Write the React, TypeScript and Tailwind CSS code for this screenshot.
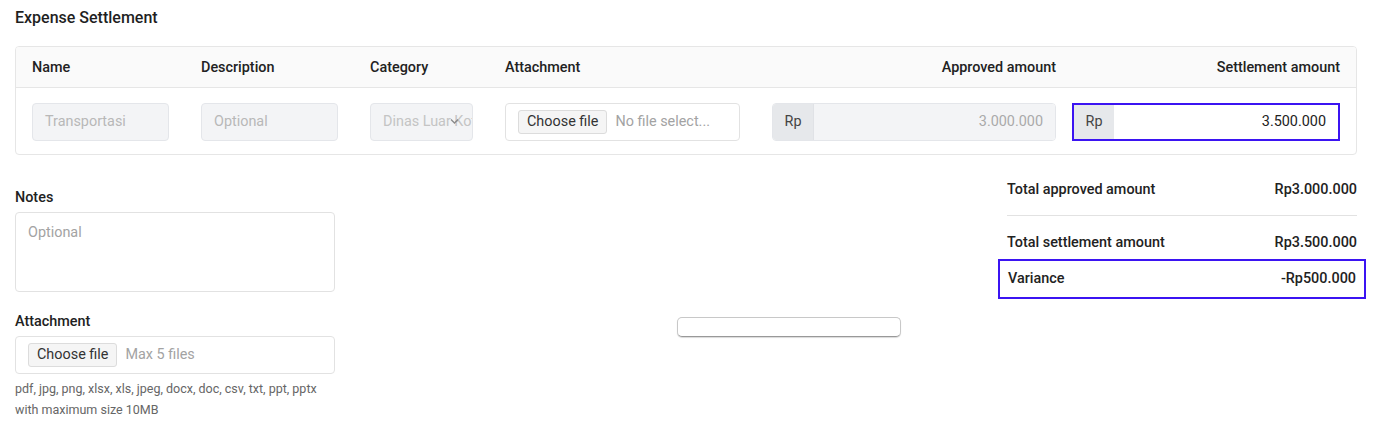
import React from 'react';

const purple = 'border-[#3b14f2]';

const FileButton: React.FC<{ label: string }> = ({ label }) => (
  <div className="flex items-center h-[38px] border border-[#e2e2e2] rounded-[4px] bg-white px-3 gap-2">
    <span className="h-[24px] px-2 flex items-center border border-[#dcdcdc] rounded-[3px] bg-[#f5f5f5] text-[14.4px] text-[#333]">Choose file</span>
    <span className="text-[14.4px] text-[#a3a3a3] whitespace-nowrap overflow-hidden text-ellipsis">{label}</span>
  </div>
);

const SummaryRow: React.FC<{ label: string; value: string }> = ({ label, value }) => (
  <div className="flex items-center justify-between text-[14.4px] font-medium text-[#222]">
    <span>{label}</span>
    <span>{value}</span>
  </div>
);

export default function App() {
  return (
    <div className="w-[1381px] h-[437px] bg-white font-['Roboto',sans-serif] text-[#222] pl-[15px] pr-[25px] pt-[7px]">
      <h2 className="text-[16px] font-medium leading-[21px] text-[#1f1f1f]">Expense Settlement</h2>

      {/* Items table */}
      <div className="mt-[18px] w-[1342px] border border-[#e6e6e6] rounded-[4px] overflow-hidden">
        <div className="flex items-center h-[41px] pt-[2px] bg-[#fafafa] border-b border-[#e6e6e6] px-4 text-[14.4px] font-medium text-[#222]">
          <div className="w-[137px]">Name</div>
          <div className="w-[137px] ml-[32px]">Description</div>
          <div className="w-[103px] ml-[32px]">Category</div>
          <div className="w-[235px] ml-[32px]">Attachment</div>
          <div className="w-[284px] ml-[32px] text-right">Approved amount</div>
          <div className="flex-1 ml-[16px] text-right">Settlement amount</div>
        </div>
        <div className="flex items-center h-[66px] pt-[2px] px-4 text-[14.4px]">
          <div className="w-[137px] h-[38px] flex items-center px-3 rounded-[4px] border border-[#e4e6ea] bg-[#f3f4f6] text-[#b8b8b8]">Transportasi</div>
          <div className="w-[137px] ml-[32px] h-[38px] flex items-center px-3 rounded-[4px] border border-[#e4e6ea] bg-[#f3f4f6] text-[#b8b8b8]">Optional</div>
          <div className="relative w-[103px] ml-[32px] h-[38px] flex items-center pl-3 rounded-[4px] border border-[#e4e6ea] bg-[#f3f4f6] text-[#c4c4c4] overflow-hidden whitespace-nowrap">
            <span>Dinas Luar Kota</span>
            <svg className="absolute left-[79px] top-[14px]" width="9" height="7" viewBox="0 0 9 7" fill="none">
              <path d="M1 1.5l3.5 3.5L8 1.5" stroke="#8a8a8a" strokeWidth="1.3" />
            </svg>
          </div>
          <div className="w-[235px] ml-[32px]">
            <FileButton label="No file select..." />
          </div>
          <div className="w-[284px] ml-[32px] h-[38px] flex rounded-[4px] border border-[#e4e6ea] overflow-hidden">
            <div className="w-[41px] flex items-center justify-center bg-[#e6e8eb] border-r border-[#e0e2e6] text-[#444]">Rp</div>
            <div className="flex-1 flex items-center justify-end pr-3 bg-[#f3f4f6] text-[#aaa]">3.000.000</div>
          </div>
          <div className={`flex-1 ml-[16px] h-[38px] flex border-2 ${purple} overflow-hidden`}>
            <div className="w-[40px] flex items-center justify-center bg-[#e6e8eb] text-[#444]">Rp</div>
            <div className="flex-1 flex items-center justify-end pr-3 bg-white text-[#222]">3.500.000</div>
          </div>
        </div>
      </div>

      <div className="flex items-start mt-[33px]">
        {/* Notes + attachment */}
        <div className="w-[320px]">
          <div className="text-[14.4px] font-medium leading-[20px]">Notes</div>
          <div className="mt-[4px] h-[80px] rounded-[4px] border border-[#e2e2e2] px-3 pt-[9px] text-[14.4px] text-[#a3a3a3]">Optional</div>
          <div className="mt-[20px] text-[14.4px] font-medium leading-[20px]">Attachment</div>
          <div className="mt-[4px]">
            <FileButton label="Max 5 files" />
          </div>
          <div className="mt-[4px] text-[12.5px] leading-[21px] text-[#666]">
            pdf, jpg, png, xlsx, xls, jpeg, docx, doc, csv, txt, ppt, pptx
            <br />
            with maximum size 10MB
          </div>
        </div>

        {/* Empty button */}
        <div className="flex-1 flex justify-center pt-[129px]">
          <div className="ml-[244px] w-[224px] h-[20px] rounded-[5px] border border-[#c8c8c8] border-b-[#999] bg-white shadow-[0_1px_1px_rgba(0,0,0,0.15)]" />
        </div>

        {/* Totals */}
        <div className="w-[368px] mr-[-10px] mt-[-11px]">
          <div className="px-[9px]">
            <div className="h-[26px] flex flex-col justify-center">
              <SummaryRow label="Total approved amount" value="Rp3.000.000" />
            </div>
            <div className="mt-[12px] border-t border-[#e2e2e2]" />
            <div className="mt-[14px] h-[26px] flex flex-col justify-center">
              <SummaryRow label="Total settlement amount" value="Rp3.500.000" />
            </div>
          </div>
          <div className={`mt-[3px] h-[40px] flex flex-col justify-center border-2 ${purple} px-[8px]`}>
            <SummaryRow label="Variance" value="-Rp500.000" />
          </div>
        </div>
      </div>
    </div>
  );
}
